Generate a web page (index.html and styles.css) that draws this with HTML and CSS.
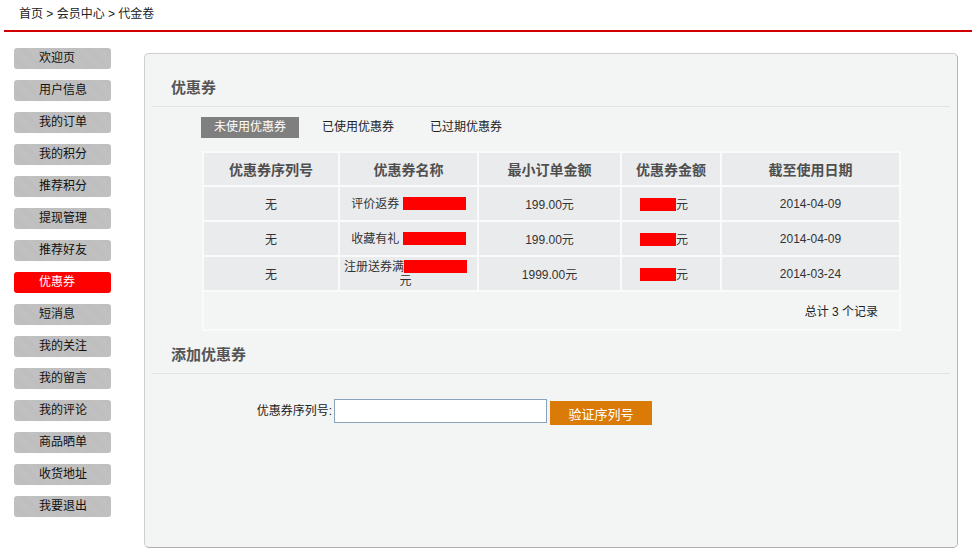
FILE: index.html
```html
<!DOCTYPE html>
<html lang="zh-CN">
<head>
<meta charset="utf-8">
<title>代金卷</title>
<link rel="stylesheet" href="styles.css">
</head>
<body>
<div class="crumb">首页 &gt; 会员中心 &gt; 代金卷</div>
<div class="rule"></div>
<div class="main">
  <ul class="side">
    <li class="btn">欢迎页</li>
    <li class="btn">用户信息</li>
    <li class="btn">我的订单</li>
    <li class="btn">我的积分</li>
    <li class="btn">推荐积分</li>
    <li class="btn">提现管理</li>
    <li class="btn">推荐好友</li>
    <li class="btn active">优惠券</li>
    <li class="btn">短消息</li>
    <li class="btn">我的关注</li>
    <li class="btn">我的留言</li>
    <li class="btn">我的评论</li>
    <li class="btn">商品晒单</li>
    <li class="btn">收货地址</li>
    <li class="btn">我要退出</li>
  </ul>
  <div class="panel">
    <h2 class="title">优惠券</h2>
    <div class="tabs">
      <span class="tab on">未使用优惠券</span>
      <span class="tab">已使用优惠券</span>
      <span class="tab">已过期优惠券</span>
    </div>
    <table class="list">
      <colgroup>
        <col class="c1"><col class="c2"><col class="c3"><col class="c4"><col class="c5">
      </colgroup>
      <thead>
        <tr><th>优惠券序列号</th><th>优惠券名称</th><th>最小订单金额</th><th>优惠券金额</th><th>截至使用日期</th></tr>
      </thead>
      <tbody>
        <tr><td>无</td><td class="name">评价返券 <span class="red rn"></span></td><td>199.00元</td><td class="amt"><span class="red ra"></span>元</td><td>2014-04-09</td></tr>
        <tr><td>无</td><td class="name">收藏有礼 <span class="red rn"></span></td><td>199.00元</td><td class="amt"><span class="red ra"></span>元</td><td>2014-04-09</td></tr>
        <tr><td>无</td><td class="name wrap">注册送券满<span class="red rn"></span>元</td><td>1999.00元</td><td class="amt"><span class="red ra"></span>元</td><td>2014-03-24</td></tr>
      </tbody>
      <tfoot>
        <tr><td colspan="5" class="total">总计 3 个记录</td></tr>
      </tfoot>
    </table>
    <h2 class="title sub">添加优惠券</h2>
    <div class="form">
      <label class="lbl" for="sn">优惠券序列号:</label>
      <input id="sn" class="inp" type="text">
      <button class="go" type="button">验证序列号</button>
    </div>
  </div>
</div>
</body>
</html>
```
FILE: styles.css
```css
* { box-sizing: border-box; }
html, body { margin: 0; padding: 0; background: #fff; }
body {
  font-family: "Liberation Sans", "Noto Sans CJK SC", sans-serif;
  font-size: 12px;
  color: #222;
  width: 976px;
  height: 550px;
  overflow: hidden;
}
.crumb {
  height: 30px;
  line-height: 28px;
  padding-left: 19px;
  color: #222;
}
.rule {
  height: 2px;
  background: #d20000;
  margin: 0 4px;
}
.main {
  display: flex;
  align-items: flex-start;
}
.side {
  list-style: none;
  margin: 0;
  padding: 16px 0 0 14px;
  width: 144px;
  flex: none;
}
.btn {
  width: 97px;
  height: 21px;
  line-height: 20px;
  padding-left: 25px;
  margin-bottom: 11px;
  border-radius: 3px;
  color: #111;
  background: repeating-linear-gradient(45deg, #c2c2c2 0 1px, #bdbdbd 1px 2px);
}
.btn.active {
  background: #ff0000;
  color: #fff;
}
.panel {
  margin-top: 21px;
  width: 814px;
  height: 495px;
  background: #f3f4f4;
  border: 1px solid #cfcfcf;
  border-right-color: #b4b4b4;
  border-bottom-color: #aeaeae;
  border-radius: 5px;
}
.title {
  margin: 0 7px;
  padding: 24px 0 0 19px;
  height: 53px;
  line-height: 20px;
  font-size: 15px;
  font-weight: bold;
  color: #555;
  border-bottom: 1px solid #e2e3e3;
}
.title.sub {
  padding-top: 14px;
  height: 43px;
}
.tabs {
  display: flex;
  gap: 10px;
  margin: 10px 0 0 56px;
}
.tab {
  width: 98px;
  height: 21px;
  line-height: 21px;
  text-align: center;
  color: #222;
}
.tab.on {
  background: #7f7f7f;
  color: #fff;
}
.list {
  margin: 13px 0 0 57px;
  width: 699px;
  border-collapse: separate;
  border-spacing: 2px;
  background: #fafafa;
  table-layout: fixed;
}
.c1 { width: 134px; }
.c2 { width: 137px; }
.c3 { width: 141px; }
.c4 { width: 98px; }
.c5 { width: 177px; }
.list th {
  height: 32px;
  background: #eaebed;
  font-size: 14px;
  font-weight: bold;
  color: #4f4f4f;
  text-align: center;
  padding: 0;
}
.list td {
  height: 33px;
  background: #eaebed;
  text-align: center;
  color: #333;
  padding: 0;
}
.list td.name { padding: 0 6px; line-height: 14px; }
.list td.wrap { padding: 0 6px 0 0; }
.list td.amt { padding-right: 14px; }
.red {
  display: inline-block;
  background: #ff0000;
  vertical-align: -2px;
}
.rn { width: 63px; height: 13px; }
.ra { width: 36px; height: 13px; }
.list td.total {
  height: 37px;
  background: #f3f4f4;
  text-align: right;
  padding-right: 21px;
  color: #222;
}
.form {
  display: flex;
  align-items: flex-start;
  margin-top: 25px;
}
.lbl {
  width: 187px;
  text-align: right;
  line-height: 24px;
  color: #222;
}
.inp {
  width: 213px;
  height: 24px;
  margin: 0 0 0 2px;
  border: 1px solid #8aa3bc;
  background: #fff;
  padding: 0 3px;
  font: inherit;
}
.go {
  margin: 2px 0 0 3px;
  width: 102px;
  height: 24px;
  background: #d97b06;
  border: 0;
  color: #fff;
  font-family: "Liberation Sans", "Noto Sans CJK SC", sans-serif;
  font-size: 13px;
  padding: 0;
}
```
